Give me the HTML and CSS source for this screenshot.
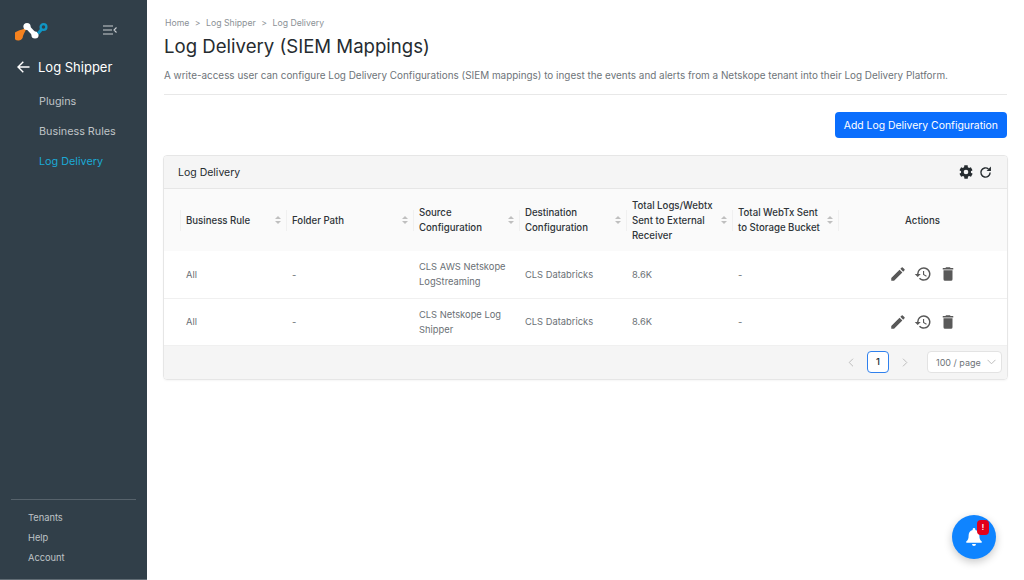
FILE: index.html
```html
<!DOCTYPE html>
<html lang="en">
<head>
<meta charset="utf-8">
<title>Log Delivery</title>
<link rel="stylesheet" href="styles.css">
</head>
<body>
<div class="app">
  <aside class="sidebar">
    <div class="brand">
      <svg class="logo" width="34" height="20" viewBox="0 0 34 20">
        <path fill="#f5821f" d="M12 6.500C9 8 5.500 8.800 1.800 10.500A4.600 4.600 0 1 0 8 15C9 12.500 10.500 9.500 12 6.500z"/>
        <path d="M12 5.500 20 14" stroke="#fff" stroke-width="4.500" fill="none"/>
        <circle cx="12" cy="5.500" r="3.600" fill="#fff"/>
        <circle cx="20" cy="14" r="3.600" fill="#fff"/>
        <path d="M23 12.500 26.500 8.500" stroke="#1196c4" stroke-width="3" fill="none"/>
        <circle cx="28.500" cy="6" r="2.900" fill="none" stroke="#1196c4" stroke-width="2.300"/>
      </svg>
      <svg class="collapse" width="14" height="10" viewBox="0 0 14 10">
        <path d="M0 1h10M0 5h9M0 9h10M13.500 2.500 11 5l2.500 2.500" stroke="#c9cdd0" stroke-width="1.100" fill="none"/>
      </svg>
    </div>
    <div class="module">
      <svg width="13" height="12" viewBox="0 0 13 12"><path d="M12.500 6H1.200M6.300 .8 1 6l5.300 5.200" stroke="#fff" stroke-width="1.400" fill="none"/></svg>
      <span>Log Shipper</span>
    </div>
    <nav class="nav">
      <a class="nav-item">Plugins</a>
      <a class="nav-item">Business Rules</a>
      <a class="nav-item nav-active">Log Delivery</a>
    </nav>
    <div class="side-foot">
      <a class="foot-item">Tenants</a>
      <a class="foot-item">Help</a>
      <a class="foot-item">Account</a>
    </div>
  </aside>
  <main class="main">
    <div class="crumbs"><span>Home</span><span>&gt;</span><span>Log Shipper</span><span>&gt;</span><span>Log Delivery</span></div>
    <h1 class="title">Log Delivery (SIEM Mappings)</h1>
    <p class="desc">A write-access user can configure Log Delivery Configurations (SIEM mappings) to ingest the events and alerts from a Netskope tenant into their Log Delivery Platform.</p>
    <div class="toolbar"><button class="primary">Add Log Delivery Configuration</button></div>
    <section class="card">
      <header class="card-head">
        <span>Log Delivery</span>
        <div class="card-tools">
          <svg width="16" height="16" viewBox="0 0 24 24"><path fill="#262c30" d="M19.400 13a7.600 7.600 0 0 0 0-2l2.400-1.800-2.500-4.400-2.800 1.200a7.500 7.500 0 0 0-1.700-1L14.500 2h-5l-.4 3a7.500 7.500 0 0 0-1.700 1L4.700 4.800 2.200 9.200 4.600 11a7.600 7.600 0 0 0 0 2l-2.400 1.800 2.500 4.400 2.800-1.200a7.500 7.500 0 0 0 1.700 1l.4 3h5l.4-3a7.500 7.500 0 0 0 1.700-1l2.800 1.200 2.500-4.400L19.400 13zM12 15.500a3.500 3.500 0 1 1 0-7 3.500 3.500 0 0 1 0 7z"/></svg>
          <svg width="13" height="13" viewBox="0 0 24 24"><path d="M20.500 12A8.500 8.500 0 1 1 17.500 5.500" fill="none" stroke="#262c30" stroke-width="2.600"/><path d="M22 1v8h-8z" fill="#262c30"/></svg>
        </div>
      </header>
      <table class="grid">
        <colgroup><col class="c0"><col class="c1"><col class="c2"><col class="c1"><col class="c3"><col class="c1"><col class="c1"><col></colgroup>
        <thead>
          <tr>
            <th></th>
            <th class="sep"><div class="th"><span>Business Rule</span><i class="sort"></i></div></th>
            <th class="sep"><div class="th"><span>Folder Path</span><i class="sort"></i></div></th>
            <th class="sep"><div class="th"><span>Source Configuration</span><i class="sort"></i></div></th>
            <th class="sep"><div class="th"><span>Destination Configuration</span><i class="sort"></i></div></th>
            <th class="sep"><div class="th"><span>Total Logs/Webtx Sent to External Receiver</span><i class="sort"></i></div></th>
            <th class="sep"><div class="th"><span>Total WebTx Sent to Storage Bucket</span><i class="sort"></i></div></th>
            <th class="sep center">Actions</th>
          </tr>
        </thead>
        <tbody>
          <tr>
            <td></td><td>All</td><td>-</td><td>CLS AWS Netskope LogStreaming</td><td>CLS Databricks</td><td>8.6K</td><td>-</td>
            <td><div class="actions">
              <svg width="18" height="18" viewBox="0 0 24 24"><use href="#pencil"/></svg>
              <svg width="18" height="18" viewBox="0 0 24 24"><use href="#history"/></svg>
              <svg width="18" height="18" viewBox="0 0 24 24"><use href="#trash"/></svg>
            </div></td>
          </tr>
          <tr>
            <td></td><td>All</td><td>-</td><td>CLS Netskope Log Shipper</td><td>CLS Databricks</td><td>8.6K</td><td>-</td>
            <td><div class="actions">
              <svg width="18" height="18" viewBox="0 0 24 24"><use href="#pencil"/></svg>
              <svg width="18" height="18" viewBox="0 0 24 24"><use href="#history"/></svg>
              <svg width="18" height="18" viewBox="0 0 24 24"><use href="#trash"/></svg>
            </div></td>
          </tr>
        </tbody>
      </table>
      <footer class="card-foot">
        <svg class="pg-arrow" width="6" height="9" viewBox="0 0 6 9"><path d="M5 .7 1.200 4.500 5 8.300" fill="none" stroke="#bdbdbd" stroke-width="1"/></svg>
        <span class="page">1</span>
        <svg class="pg-arrow" width="6" height="9" viewBox="0 0 6 9"><path d="M1 .7 4.800 4.500 1 8.300" fill="none" stroke="#bdbdbd" stroke-width="1"/></svg>
        <span class="size">100 / page
          <svg width="9" height="6" viewBox="0 0 9 6"><path d="M.5 .8 4.500 4.800 8.500 .8" fill="none" stroke="#bdbdbd" stroke-width="1"/></svg>
        </span>
      </footer>
    </section>
  </main>
</div>
<button class="bell" aria-label="Notifications">
  <svg width="18" height="20" viewBox="0 0 20 22"><path fill="#fff" d="M10 1a1.500 1.500 0 0 1 1.500 1.500v.6C14.600 3.800 16 6.400 16 9.500c0 3.400.8 5 2.600 6.600.5.500.2 1.400-.6 1.400H2c-.8 0-1.100-.9-.6-1.400C3.200 14.500 4 12.900 4 9.500c0-3.100 1.400-5.700 4.500-6.400v-.6A1.500 1.500 0 0 1 10 1zM7.800 18.700h4.400a2.200 2.200 0 0 1-4.400 0z"/></svg>
  <span class="badge">!</span>
</button>
<svg class="defs" width="0" height="0">
  <defs>
    <path id="pencil" fill="#595959" d="M3 17.250V21h3.750L17.810 9.940l-3.750-3.750L3 17.250zM20.710 7.040a1 1 0 0 0 0-1.410l-2.340-2.340a1 1 0 0 0-1.410 0l-1.830 1.830 3.750 3.750 1.830-1.830z"/>
    <path id="history" fill="#595959" d="M13 3a9 9 0 0 0-9 9H1l3.890 3.890.07.14L9 12H6a7 7 0 1 1 2.050 4.950l-1.420 1.420A9 9 0 1 0 13 3zm-1 5v5l4.280 2.540.72-1.210-3.500-2.080V8H12z"/>
    <path id="trash" fill="#595959" d="M6 19a2 2 0 0 0 2 2h8a2 2 0 0 0 2-2V7H6v12zM19 4h-3.500l-1-1h-5l-1 1H5v2h14V4z"/>
  </defs>
</svg>
</body>
</html>
```
FILE: styles.css
```css
* { box-sizing: border-box; }
html, body { margin: 0; height: 100%; overflow: hidden; }
body { font-family: Inter, "Liberation Sans", sans-serif; background: #fff; color: #262c30; }
.app { display: flex; height: 580px; }
.sidebar { width: 147px; flex: none; background: #313f49; border-bottom: 1px solid #626d75; display: flex; flex-direction: column; color: #fff; }
.brand { display: flex; align-items: center; justify-content: space-between; padding: 20px 30px 0 15px; height: 42px; }
.collapse { margin-bottom: 2px; }
.module { display: flex; align-items: center; gap: 8px; padding: 0 0 0 17px; margin-top: 15px; height: 20px; font-size: 13px; font-weight: 400; color: #fff; }
.nav { display: flex; flex-direction: column; margin-top: 10px; }
.nav-item { height: 30px; line-height: 30px; padding-left: 39px; font-size: 10.800px; color: #bfc3c6; }
.nav-active { color: #1ba9d5; }
.side-foot { margin: auto 11px 11px; border-top: 1px solid #56626b; padding-top: 8px; display: flex; flex-direction: column; }
.foot-item { height: 20px; line-height: 20px; padding-left: 17px; font-size: 9.300px; color: #bfc3c6; }
.main { flex: 1; min-width: 0; padding: 17px 17px 0 17px; }
.crumbs { display: flex; gap: 5.500px; padding-left: 1px; font-size: 8.700px; line-height: 12px; color: #8b9196; }
.title { margin: 3px 0 0; font-size: 18.600px; font-weight: 400; line-height: 28px; color: #262c30; }
.desc { margin: 7px 0 0; padding-bottom: 11px; border-bottom: 1px solid #e8e8e8; font-size: 9.920px; line-height: 16px; color: #6e7479; white-space: nowrap; }
.toolbar { display: flex; justify-content: flex-end; margin-top: 17px; }
.primary { height: 26px; padding: 0 9px; border: 0; border-radius: 4px; background: #0a6efd; color: #fff; font: 400 10.400px Inter, sans-serif; }
.card { margin-top: 17px; margin-right: -1px; margin-left: -1px; border: 1px solid #e6e6e6; border-radius: 4px; box-shadow: 0 1px 2px rgba(0,0,0,.04); overflow: hidden; }
.card-head { height: 33px; background: #f5f5f5; border-bottom: 1px solid #e6e6e6; padding: 0 15px 0 14px; display: flex; align-items: center; justify-content: space-between; font-size: 10.500px; }
.card-tools { display: flex; align-items: center; gap: 5px; }
.grid { width: 100%; border-collapse: collapse; table-layout: fixed; font-size: 9.350px; }
.c0 { width: 16px; } .c1 { width: 106px; } .c2 { width: 127px; } .c3 { width: 107px; }
.grid th { height: 62px; padding: 0; background: #fafafa; font-size: 9.650px; font-weight: 500; text-align: left; line-height: 15px; position: relative; color: #2e3438; }
.th { display: flex; align-items: center; justify-content: space-between; padding: 0 5px 0 6px; gap: 4px; }
.sep::before { content: ""; position: absolute; left: 0; top: 50%; height: 21px; margin-top: -10px; border-left: 1px solid #f0f0f0; }
.center { text-align: center !important; }
.sort { flex: none; display: flex; flex-direction: column; gap: 1.500px; }
.sort::before, .sort::after { content: ""; display: block; width: 0; height: 0; border-left: 3.500px solid transparent; border-right: 3.500px solid transparent; }
.sort::before { border-bottom: 3.500px solid #bfbfbf; }
.sort::after { border-top: 3.500px solid #bfbfbf; }
.grid td { height: 47px; padding: 0 6px; border-bottom: 1px solid #f0f0f0; line-height: 15px; color: #6a7075; vertical-align: middle; }
.actions { display: flex; justify-content: center; gap: 7px; }
.card-foot { height: 33px; background: #f5f5f5; display: flex; align-items: center; justify-content: flex-end; padding-right: 5px; font-size: 9px; }
.pg-arrow { margin: 0 13px; }
.page { width: 22px; height: 22px; line-height: 20px; text-align: center; border: 1px solid #2f80ed; border-radius: 4px; background: #fff; color: #262c30; font-weight: 500; font-size: 9.500px; }
.size { margin-left: 6px; width: 75px; height: 22px; display: flex; align-items: center; gap: 6px; padding-left: 8px; border: 1px solid #e3e3e3; border-radius: 4px; background: #fff; color: #6e7479; }
.bell { position: absolute; left: 952px; top: 515px; width: 44px; height: 44px; border: 0; padding: 0; border-radius: 50%; background: #0f84ff; box-shadow: 0 3px 8px rgba(0,0,0,.22); display: flex; align-items: center; justify-content: center; }
.badge { position: absolute; left: 25px; top: 5px; width: 12px; height: 15px; border-radius: 4px; background: #e3001b; color: #fff; font: 700 7px/15px Inter, sans-serif; text-align: center; }
.defs { position: absolute; }
```
